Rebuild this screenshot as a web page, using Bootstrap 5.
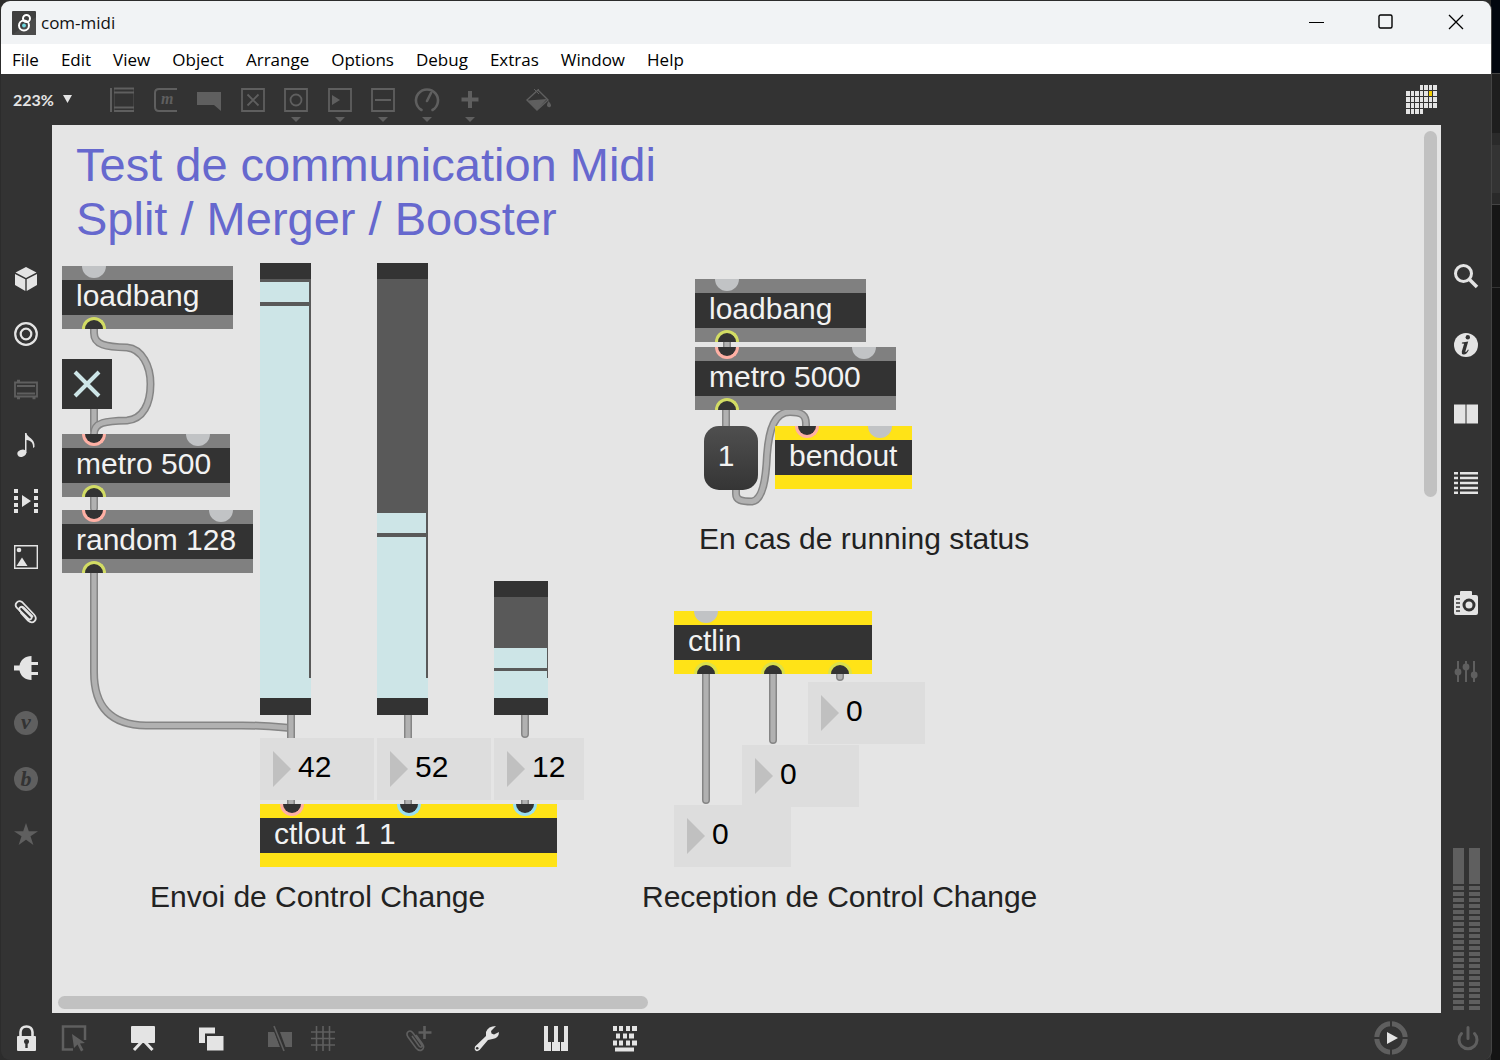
<!DOCTYPE html>
<html lang="fr">
<head>
<meta charset="utf-8">
<meta name="viewport" content="width=device-width, initial-scale=1">
<title>com-midi</title>
<link href="https://cdn.jsdelivr.net/npm/bootstrap@5.3.0/dist/css/bootstrap.min.css" rel="stylesheet">
<style>
:root{--panel:#333;--on:#e4e4e4;--off:#5f5f5f;--paper:#e5e5e5;--lit:#cde5e7;--mid:#595959}
body{background:#151515;font-family:"Liberation Sans",Arial,sans-serif;color:#111}
button{font:inherit}
svg{display:block;overflow:visible;flex-shrink:0}
.desktop{min-height:100vh;padding:1px 8px 0 1px;background:linear-gradient(#02070f 0 73px,#444 73px 74px,#1e1e1e 74px 133px,#2a2a2a 133px 145px,#333 145px 193px,#292929 193px 204px,#444 204px 205px,#161616 205px 287px,#333 287px 288px,#141414 288px) right/9px 100% no-repeat,#2c2c2c}
.app-window{background:var(--panel);border-radius:9px;overflow:hidden;border-right:1px solid #444}
.titlebar{height:43px;background:#f1f3f5;font:17px/24px "Open Sans",sans-serif}
.titlebar .cap{width:70px;height:43px}
.menubar{height:30px;background:#fff;font:17px/31px "Open Sans",sans-serif;gap:22px;padding:0 11px}
.menubar a{color:#000;text-decoration:none}
.plain{background:none;border:0;padding:0;color:var(--off);display:flex;align-items:center;justify-content:center}
.lit{color:var(--on)}
.toolbar{height:51px}
.zoombox{width:62px;margin-left:12px;height:51px}
.zoombox select{appearance:none;background:none;border:0;padding:0;width:50px;color:var(--on);font:bold 16px/24px Lato,sans-serif}
.tools{width:372px;margin-left:35px}
.paint{margin-left:45px}
.leftbar{width:51px;padding:126px 1px 0 0}
.leftbar nav{height:611px}
.rightbar{width:50px;padding-top:116px;padding-bottom:3px}
.rightbar .plain{height:69px}
.rightbar .lower{margin-top:51px}
.meters{gap:5px}
.meter{width:11px;height:162px;background:linear-gradient(var(--off),var(--off)) top/11px 36px no-repeat,repeating-linear-gradient(var(--panel) 0 2px,var(--off) 2px 6px)}
.patch{background:var(--paper);min-height:886px;overflow:hidden}
.wires{left:0;top:0;width:1040px;height:880px}
.wires .edge{stroke:#858585;stroke-width:8}
.wires .core{stroke:#b1b1b1;stroke-width:5}
.thumb{background:#c1c1c1;border-radius:7px}
.thumb-v{right:4px;top:6px;width:13px;height:41.2%}
.thumb-h{left:6px;bottom:4px;width:42.5%;height:13px}
.obj,.num,.vslider,.toggle,.msg,.note{position:absolute}
.obj{font-size:30px;line-height:32px}
.obj .text{background:#333;color:#f2f2f2;height:35px;padding-left:14px;white-space:nowrap}
.ports{height:14px;background:#808080;display:flex;justify-content:space-between;padding:0 20px}
.midi .ports{background:#ffe317}
.ports.out{align-items:flex-end}
.port{width:24px;height:12px;background:#c1c3c5}
.in .port{border-radius:0 0 12px 12px}
.out .port{border-radius:12px 12px 0 0}
.in .hot,.in .cold{background:#333;border:3px solid #ffb0a4;border-top:0}
.in .cold{border-color:#9adff0}
.out .port{background:#333;border:3px solid #d2dc64;border-bottom:0}
.midi .out .port{border-color:#dbe04c}
.num{width:117px;height:62px;background:#ddd;padding-left:13px;display:flex;align-items:center}
.num input{border:0;background:none;padding:0;margin-left:7px;width:50px;font-size:30px;line-height:34px;color:#000;margin-bottom:4px}
.vslider{appearance:none;-webkit-appearance:none;margin:0;width:51px;height:452px;border:solid #333;border-width:16px 0 17px}
.vslider::-webkit-slider-thumb{-webkit-appearance:none;width:1px;height:1px}
.vslider::-webkit-slider-runnable-track{background:none}
.toggle{width:50px;height:50px;background:#333}
.toggle input{appearance:none;inset:0;position:absolute;margin:0}
.msg{border:0;width:54px;height:64px;border-radius:15px;background:linear-gradient(#4f4f4f,#353535);color:#f2f2f2;font-size:30px;line-height:34px;padding:0 10px 4px 0}
.note{font-size:30px;line-height:34px;white-space:nowrap;margin:0;color:#222}
.headline{font-size:47px;line-height:54px;color:#6668ce;font-weight:400}
/* patch layout: one coordinate pair per box */
#headline{left:24px;top:13px}
#load1{left:10px;top:141px;width:171px}
#tog{left:10px;top:234px}
#metro1{left:10px;top:309px;width:168px}
#rand{left:10px;top:385px;width:191px}
#s1{left:208px;top:138px;background:linear-gradient(var(--mid),var(--mid)) 49px 0/2px 399px no-repeat,linear-gradient(var(--mid) 0 3px,var(--lit) 3px 23px,var(--mid) 23px 27px,var(--lit) 27px)}
#s2{left:325px;top:138px;background:linear-gradient(var(--mid),var(--mid)) 49px 0/2px 399px no-repeat,linear-gradient(var(--mid) 0 234px,var(--lit) 234px 254px,var(--mid) 254px 258px,var(--lit) 258px)}
#s3{left:442px;top:456px;width:54px;height:134px;background:linear-gradient(var(--mid),var(--mid)) 53px 0/1px 81px no-repeat,linear-gradient(var(--mid) 0 51px,var(--lit) 51px 71px,var(--mid) 71px 74px,var(--lit) 74px)}
#n1{left:208px;top:613px;width:114px}
#n2{left:325px;top:613px;width:114px}
#n3{left:442px;top:613px;width:90px}
#ctlout{left:208px;top:679px;width:297px}
#cap1{left:98px;top:755px}
#load2{left:643px;top:154px;width:171px}
#metro2{left:643px;top:222px;width:201px}
#one{left:652px;top:301px}
#bend{left:723px;top:301px;width:137px}
#cap2{left:647px;top:397px}
#ctlin{left:622px;top:486px;width:198px}
#n4{left:756px;top:557px}
#n5{left:690px;top:620px}
#n6{left:622px;top:680px}
#cap3{left:590px;top:755px}
.footerbar{height:47px;padding:3px 11px 0 11px}
.gap-a{gap:21px}.gap-b{gap:40px}.gap-c{gap:16px}.gap-d{gap:41px;margin-left:67px}.gap-e{gap:48px}
.padgrid{margin-right:53px}
</style>
<script src="https://cdn.jsdelivr.net/npm/bootstrap@5.3.0/dist/js/bootstrap.bundle.min.js"></script>
</head>
<body>
<div class="desktop d-flex">
<div class="app-window d-flex flex-column flex-fill">

<header class="titlebar d-flex align-items-center">
  <svg class="ms-2" width="32" height="24" viewBox="0 0 32 24"><rect x="3" width="24" height="24" rx="1" fill="#3f3f3f"/><path d="M3 24L27 6v18z" fill="#4b4b4b"/><g fill="none" stroke="#fff" stroke-width="2"><circle cx="15" cy="14.500" r="5"/><circle cx="17.500" cy="7.500" r="3.500"/></g><circle cx="15" cy="14.500" r="1.900" fill="#6fd8e0"/></svg>
  <span class="flex-fill">com-midi</span>
  <button class="plain cap" aria-label="Minimize"><svg width="16" height="16"><path d="M1 7.500h15" stroke="#000"/></svg></button>
  <button class="plain cap" aria-label="Maximize"><svg width="16" height="16"><rect x="1" y="0" width="13" height="13" rx="1.500" fill="none" stroke="#000" stroke-width="1.400"/></svg></button>
  <button class="plain cap" aria-label="Close"><svg width="16" height="16"><path d="M1 0l14 14M15 0L1 14" stroke="#000" stroke-width="1.300"/></svg></button>
</header>

<nav class="menubar d-flex">
  <a href="#">File</a><a href="#">Edit</a><a href="#">View</a><a href="#">Object</a><a href="#">Arrange</a><a href="#">Options</a><a href="#">Debug</a><a href="#">Extras</a><a href="#">Window</a><a href="#">Help</a>
</nav>

<div class="toolbar d-flex align-items-center">
  <div class="zoombox d-flex align-items-center">
    <select aria-label="Zoom"><option>223%</option></select>
    <svg width="10" height="10" viewBox="0 0 10 10" fill="#e4e4e4"><path d="M0 0h9L4.500 8z"/></svg>
  </div>
  <div class="tools d-flex justify-content-between">
    <button class="plain" aria-label="Object"><svg width="24" height="51" viewBox="0 0 24 51" stroke="currentColor" fill="none"><path d="M1 14v24" stroke-width="2"/><path d="M4 14.500h20M4 18.500h20M4 33.500h20M4 37h20" stroke-width="1.800"/><path d="M4.500 14v23M23.500 14v23" stroke-width="1" opacity=".4"/></svg></button>
    <button class="plain" aria-label="Message"><svg width="24" height="51" viewBox="0 0 24 51"><path d="M23 15H5q-4 0-4 4v14q0 4 4 4h18" stroke="currentColor" fill="none" stroke-width="2"/><text x="7" y="30" font-family="Liberation Serif" font-style="italic" font-weight="bold" font-size="16" fill="currentColor">m</text></svg></button>
    <button class="plain" aria-label="Comment"><svg width="24" height="51" viewBox="0 0 24 51"><path d="M0 18h24v19l-7-6H0z" fill="currentColor"/></svg></button>
    <button class="plain" aria-label="Toggle"><svg width="24" height="51" viewBox="0 0 24 51" stroke="currentColor" fill="none" stroke-width="1.800"><path d="M1 15h22v22H1zM6.500 20.500l11 11M17.500 20.500l-11 11"/></svg></button>
    <button class="plain" aria-label="Button"><svg width="24" height="51" viewBox="0 0 24 51" stroke="currentColor" fill="none" stroke-width="1.800"><path d="M1 15h22v22H1z"/><circle cx="12" cy="26" r="5.500"/><path d="M7 43h10l-5 5z" fill="currentColor" stroke="none"/></svg></button>
    <button class="plain" aria-label="Playback"><svg width="24" height="51" viewBox="0 0 24 51" stroke="currentColor" fill="none" stroke-width="1.800"><path d="M1 15h22v22H1z"/><path d="M4 21l8 5-8 5zM7 43h10l-5 5z" fill="currentColor" stroke="none"/></svg></button>
    <button class="plain" aria-label="Slider"><svg width="24" height="51" viewBox="0 0 24 51" stroke="currentColor" fill="none" stroke-width="1.800"><path d="M1 15h22v22H1zM4 26h16"/><path d="M7 43h10l-5 5z" fill="currentColor" stroke="none"/></svg></button>
    <button class="plain" aria-label="Dial"><svg width="24" height="51" viewBox="0 0 24 51"><path d="M6.500 36A11 11 0 1 1 17.500 36M12 27l4-8" stroke="currentColor" fill="none" stroke-width="2.600" stroke-linecap="round"/><path d="M7 43h10l-5 5z" fill="currentColor"/></svg></button>
    <button class="plain" aria-label="Add"><svg width="24" height="51" viewBox="0 0 24 51"><path d="M12 17v17M3.500 25.500h17" stroke="currentColor" stroke-width="4"/><path d="M7 43h10l-5 5z" fill="currentColor"/></svg></button>
  </div>
  <button class="plain paint" aria-label="Format"><svg width="24" height="51" viewBox="0 0 24 51"><path d="M11 16L21 26 10 36 0 26z" fill="none" stroke="currentColor" stroke-width="1.400"/><path d="M1 26.500L20 25 10 36z" fill="currentColor"/><path d="M21.500 27q3 3.500 2.500 5-1.500 2.500-4 0-.5-1.500 1.500-5" fill="currentColor"/><path d="M7 15l5 5M12 15l-4 4" stroke="currentColor" fill="none"/></svg></button>
  <button class="plain lit ms-auto padgrid" aria-label="Palette"><svg width="32" height="30" viewBox="0 0 32 30" fill="currentColor">
    <path d="M14 0h3v5h-3zM18 0h4v5h-4zM23 0h3v5h-3zM27 0h4v5h-4zM0 6h4v5H0zM5 6h3v5H5zM9 6h4v5H9zM14 6h3v5h-3zM18 6h4v5h-4zM27 6h4v5h-4zM0 12h4v5H0zM5 12h3v5H5zM9 12h4v5H9zM14 12h3v5h-3zM18 12h4v5h-4zM23 12h3v5h-3zM27 12h4v5h-4zM0 18h4v5H0zM5 18h3v5H5zM9 18h4v5H9zM14 18h3v5h-3zM18 18h4v5h-4zM23 18h3v5h-3zM27 18h4v5h-4zM0 24h4v5H0zM5 24h3v5H5zM9 24h4v5H9zM14 24h3v5h-3z"/><path d="M23 6h3v5h-3z" fill="#f5d000"/></svg></button>
</div>

<div class="d-flex flex-fill">
  <aside class="leftbar flex-shrink-0">
    <nav class="d-flex flex-column">
      <button class="plain lit flex-fill" aria-label="Packages"><svg width="24" height="24" viewBox="0 0 24 24" fill="currentColor"><path d="M12 0l10.500 5.500L12 11 1.500 5.500zM1 7l10.300 5.300V24L1 18zM23 7l-10.300 5.300V24L23 18z"/></svg></button>
      <button class="plain lit flex-fill" aria-label="Audio"><svg width="24" height="24" viewBox="0 0 24 24" fill="none" stroke="currentColor" stroke-width="2.200"><circle cx="12" cy="12" r="10.800"/><circle cx="12" cy="12" r="5.300"/></svg></button>
      <button class="plain flex-fill" aria-label="Devices"><svg width="24" height="24" viewBox="0 0 24 24" fill="none" stroke="currentColor" stroke-width="1.800"><path d="M1 4.500h22v14H1zM3 8h18M3 15.500h18"/><path d="M3 3h3M3 20h3M18.500 20h3" stroke-width="2.500"/></svg></button>
      <button class="plain lit flex-fill" aria-label="Sounds"><svg width="24" height="24" viewBox="0 0 24 24" fill="currentColor"><ellipse cx="7.800" cy="20.300" rx="4.500" ry="3.500" transform="rotate(-22 7.800 20.300)"/><path d="M11 0h1.500c.5 5 9 5 8 14l-1.500 1c.5-5-2-7.500-6.500-8v13H11z"/></svg></button>
      <button class="plain lit flex-fill" aria-label="Video"><svg width="24" height="24" viewBox="0 0 24 24" fill="currentColor"><path d="M0 0h4v4H0zM0 7h4v4H0zM0 14h4v4H0zM0 20h4v4H0zM20 0h4v4h-4zM20 7h4v4h-4zM20 14h4v4h-4zM20 20h4v4h-4zM8 6l9 6-9 6z"/></svg></button>
      <button class="plain lit flex-fill" aria-label="Images"><svg width="24" height="24" viewBox="0 0 24 24" fill="currentColor"><path d="M.7.700h22.600v22.600H.7z" fill="none" stroke="currentColor" stroke-width="1.400"/><circle cx="5" cy="5" r="2.300"/><path d="M2.500 21L8 12.500l5.500 8.500z"/></svg></button>
      <button class="plain lit flex-fill" aria-label="Snippets"><svg width="24" height="24" viewBox="0 0 24 24" fill="none" stroke="currentColor" stroke-width="1.800" stroke-linecap="round"><path d="M8 7l9 9c2 2.500-1 4.500-3 2.500L3 8C-.5 4 4-.5 8 2l12 12.500c4.500 5-1 10.500-6 6L7 13"/><path d="M12 17L6 11c-2-3 1-5.500 3.500-3.500l9 9"/></svg></button>
      <button class="plain lit flex-fill" aria-label="Plug-ins"><svg width="24" height="24" viewBox="0 0 24 24" fill="currentColor"><path d="M17.500 0v6H24v3h-6.500v7H24v3h-6.500v5C11 24 6.500 20 5.500 14.500H0v-5h5.500C6.500 4 11 0 17.500 0z"/></svg></button>
      <button class="plain flex-fill" aria-label="Vizzie"><svg width="24" height="24" viewBox="0 0 24 24"><circle cx="12" cy="12" r="12" fill="currentColor"/><text x="12" y="18" text-anchor="middle" font-family="Liberation Serif" font-weight="bold" font-style="italic" font-size="22" fill="#333">v</text></svg></button>
      <button class="plain flex-fill" aria-label="BEAP"><svg width="24" height="24" viewBox="0 0 24 24"><circle cx="12" cy="12" r="12" fill="currentColor"/><text x="12" y="19" text-anchor="middle" font-family="Liberation Serif" font-weight="bold" font-style="italic" font-size="22" fill="#333">b</text></svg></button>
      <button class="plain flex-fill" aria-label="Favorites"><svg width="24" height="24" viewBox="0 0 24 24" fill="currentColor"><path d="M12 1l2.800 8.300H24l-7.500 5 2.900 8.700-7.400-5.300L4.600 23l2.900-8.700L0 9.300h9.200z"/></svg></button>
    </nav>
  </aside>

  <main class="patch position-relative flex-fill">
    <svg class="wires position-absolute" viewBox="52 125 1040 880" fill="none" stroke-linecap="round">
      <defs>
        <path id="w-rand" d="M94 573V672C94 706 110 725 146 725.500H235C262 725 278 727 289 728"/>
        <path id="w-load" d="M94 329V333C94 345 106 347 127 347.500C142 349 150.500 366 150.500 384C150.500 404 143 419 127 420.500C106 421 94 422 94 434"/>
        <path id="w-bend" d="M736 490V494C736 500 741 501.500 752 501.500C763 500 766 478 767 455C769 428 775 412 790 412C802 412 806 415 806 424V428"/>
      </defs>
      <use href="#w-rand" class="edge"/><use href="#w-rand" class="core"/>
      <path class="edge" d="M94 405V430M94 497V508M291 712V740M408 712V740M525 712V734M291 796V808M408 796V808M525 796V808M727 342V350M726 410V427M706 674V800M773 674V740M840 674V677"/>
      <path class="core" d="M94 405V430M94 497V508M291 712V740M408 712V740M525 712V734M291 796V808M408 796V808M525 796V808M727 342V350M726 410V427M706 674V800M773 674V740M840 674V677"/>
      <use href="#w-load" class="edge"/><use href="#w-load" class="core"/>
      <use href="#w-bend" class="edge"/><use href="#w-bend" class="core"/>
    </svg>

    <h1 class="note headline" id="headline">Test de communication Midi<br>Split / Merger / Booster</h1>

    <div class="obj" id="load1"><div class="ports in"><i class="port"></i></div><div class="text">loadbang</div><div class="ports out"><i class="port"></i></div></div>
    <label class="toggle" id="tog" aria-label="Metro on"><input type="checkbox" checked aria-label="Metro on"><svg width="50" height="50"><path d="M13 13l24 24M37 13L13 37" stroke="#cde5e7" stroke-width="4"/></svg></label>
    <div class="obj" id="metro1"><div class="ports in"><i class="port hot"></i><i class="port"></i></div><div class="text">metro 500</div><div class="ports out"><i class="port"></i></div></div>
    <div class="obj" id="rand"><div class="ports in"><i class="port hot"></i><i class="port"></i></div><div class="text">random 128</div><div class="ports out"><i class="port"></i></div></div>

    <input class="vslider" id="s1" type="range" min="0" max="127" value="122" aria-label="Control number">
    <input class="vslider" id="s2" type="range" min="0" max="127" value="52" aria-label="Value">
    <input class="vslider" id="s3" type="range" min="0" max="16" value="12" aria-label="Channel">

    <label class="num" id="n1"><svg width="18" height="36" fill="#c0c0c0"><path d="M0 0l18 18L0 36z"/></svg><input value="42" aria-label="Value 1"></label>
    <label class="num" id="n2"><svg width="18" height="36" fill="#c0c0c0"><path d="M0 0l18 18L0 36z"/></svg><input value="52" aria-label="Value 2"></label>
    <label class="num" id="n3"><svg width="18" height="36" fill="#c0c0c0"><path d="M0 0l18 18L0 36z"/></svg><input value="12" aria-label="Value 3"></label>
    <div class="obj midi" id="ctlout"><div class="ports in"><i class="port hot"></i><i class="port cold"></i><i class="port cold"></i></div><div class="text">ctlout 1 1</div><div class="ports out"></div></div>
    <p class="note" id="cap1">Envoi de Control Change</p>

    <div class="obj" id="load2"><div class="ports in"><i class="port"></i></div><div class="text">loadbang</div><div class="ports out"><i class="port"></i></div></div>
    <div class="obj" id="metro2"><div class="ports in"><i class="port hot"></i><i class="port"></i></div><div class="text">metro 5000</div><div class="ports out"><i class="port"></i></div></div>
    <button class="msg" id="one">1</button>
    <div class="obj midi" id="bend"><div class="ports in"><i class="port hot"></i><i class="port"></i></div><div class="text">bendout</div><div class="ports out"></div></div>
    <p class="note" id="cap2">En cas de running status</p>

    <div class="obj midi" id="ctlin"><div class="ports in"><i class="port"></i></div><div class="text">ctlin</div><div class="ports out"><i class="port"></i><i class="port"></i><i class="port"></i></div></div>
    <label class="num" id="n4"><svg width="18" height="36" fill="#c0c0c0"><path d="M0 0l18 18L0 36z"/></svg><input value="0" aria-label="Channel in"></label>
    <label class="num" id="n5"><svg width="18" height="36" fill="#c0c0c0"><path d="M0 0l18 18L0 36z"/></svg><input value="0" aria-label="Controller in"></label>
    <label class="num" id="n6"><svg width="18" height="36" fill="#c0c0c0"><path d="M0 0l18 18L0 36z"/></svg><input value="0" aria-label="Value in"></label>
    <p class="note" id="cap3">Reception de Control Change</p>

    <div class="thumb thumb-v position-absolute"></div>
    <div class="thumb thumb-h position-absolute"></div>
  </main>

  <aside class="rightbar flex-shrink-0 d-flex flex-column">
    <button class="plain lit" aria-label="Search"><svg width="24" height="24" viewBox="0 0 24 24" fill="none" stroke="currentColor"><circle cx="9.500" cy="9.500" r="8" stroke-width="3"/><path d="M15 15l8 8" stroke-width="3.500"/></svg></button>
    <button class="plain lit" aria-label="Inspector"><svg width="24" height="24" viewBox="0 0 24 24"><circle cx="12" cy="12" r="12" fill="currentColor"/><circle cx="13.800" cy="4.300" r="2.200" fill="#333"/><path d="M8 9.500l6.200-1-3 10.500q1.500 0 2.800-2.500l.8.500q-2.500 5-5.500 4.500-2-.5-1.500-3l2.300-7.800-2.300-.2z" fill="#333"/></svg></button>
    <button class="plain lit" aria-label="Reference"><svg width="24" height="24" viewBox="0 0 24 24" fill="currentColor"><path d="M0 2.500h11.500v19H0zM12.500 2.500H24v19H12.500z"/></svg></button>
    <button class="plain lit" aria-label="Console"><svg width="24" height="24" viewBox="0 0 24 24" stroke="currentColor" stroke-width="2.400"><path d="M0 2.200h4M6 2.200h18M0 7h4M6 7h18M0 12h4M6 12h18M0 17h4M6 17h18M0 21.800h4M6 21.800h18"/></svg></button>
    <button class="plain lit lower" aria-label="Snapshots"><svg width="24" height="24" viewBox="0 0 24 24"><path d="M6 4V1q0-1 1-1h10q1 0 1 1v3h4q2 0 2 2v16q0 2-2 2H2q-2 0-2-2V6q0-2 2-2z" fill="currentColor"/><circle cx="15" cy="14" r="5" fill="none" stroke="#333" stroke-width="3"/><path d="M2 8h4M2 12h4M2 16h4M2 20h4" stroke="#333" stroke-width="1.500"/></svg></button>
    <button class="plain" aria-label="Mixer"><svg width="24" height="24" viewBox="0 0 24 24"><path d="M4 1v21M12 1v21M20 1v21" stroke="currentColor" stroke-width="2"/><g fill="currentColor"><circle cx="4" cy="12" r="3.400"/><circle cx="12" cy="7" r="3.400"/><circle cx="20.200" cy="15" r="3.400"/></g></svg></button>
    <div class="meters d-flex justify-content-center mt-auto"><div class="meter"></div><div class="meter"></div></div>
  </aside>
</div>

<footer class="footerbar d-flex justify-content-between align-items-center">
  <div class="d-flex">
    <div class="d-flex gap-b">
      <div class="d-flex gap-a">
        <button class="plain lit" aria-label="Lock"><svg width="28" height="28" viewBox="0 0 28 28" fill="currentColor"><path d="M8.500 14V8Q9 2.500 14.500 2.500T20.500 8v6" fill="none" stroke="currentColor" stroke-width="2.600"/><rect x="5" y="12" width="19" height="15" rx="1"/><circle cx="14.500" cy="17.500" r="2.500" fill="#333"/><path d="M13.300 18h2.400v6h-2.400z" fill="#333"/></svg></button>
        <button class="plain" aria-label="Operate"><svg width="28" height="28" viewBox="0 0 28 28"><path d="M12 25.500H2V2.500h22V16" fill="none" stroke="currentColor" stroke-width="2.500"/><path d="M11 10l13 9-5 .5 3.500 6.500-2.500 1.500-3.500-7L13 24z" fill="currentColor"/></svg></button>
      </div>
      <button class="plain lit" aria-label="Presentation"><svg width="28" height="28" viewBox="0 0 28 28"><rect x="2" y="2" width="24" height="17" rx="1" fill="currentColor"/><path d="M5 26L12.500 18M23.500 26L16 18" stroke="currentColor" stroke-width="3"/></svg></button>
      <button class="plain lit" aria-label="Windows"><svg width="28" height="28" viewBox="0 0 28 28" fill="currentColor"><path d="M2 3.500h16v6H8v9.500H2zM10 12h16.500v14.500H10z"/></svg></button>
      <div class="d-flex gap-c">
        <button class="plain" aria-label="Snap"><svg width="28" height="28" viewBox="0 0 28 28"><path d="M3 8h6.500l5.500 15H3zM15 8h12v15h-6.500z" fill="currentColor"/><path d="M9 2l10 25" stroke="#333" stroke-width="4"/><path d="M9 2l10 25" stroke="currentColor" stroke-width="1.600"/></svg></button>
        <button class="plain" aria-label="Grid"><svg width="28" height="28" viewBox="0 0 28 28" stroke="currentColor" stroke-width="1.600"><path d="M7.500 2v25M14 2v25M20.500 2v25M2 8h24M2 14.500h24M2 21h24"/></svg></button>
      </div>
    </div>
    <div class="d-flex gap-d">
      <button class="plain" aria-label="Add snippet"><svg width="28" height="28" viewBox="0 0 28 28" fill="none" stroke="currentColor" stroke-width="1.600"><path d="M8 12l7 10c2 2 4 1 2-2L9 9C6 5 1 8 4 13l8 11c4 5 10 1 6.500-4L12 11"/><path d="M20.500 2v13M14.500 8.500h13" stroke-width="2.600"/></svg></button>
      <button class="plain lit" aria-label="Tools"><svg width="28" height="28" viewBox="0 0 28 28"><path d="M23 2l-5 5 .5 2.500 2.500 1L26 8q0 6-6.500 7L15 16 6.500 26q-2.500 2-4 .5t-.5-4L13 12V8q2-6 10-6z" fill="currentColor"/><circle cx="4.200" cy="24.300" r="1.300" fill="#333"/></svg></button>
      <button class="plain lit" aria-label="Keyboard"><svg width="28" height="28" viewBox="0 0 28 28" fill="currentColor"><path d="M2 2h4v16h3v9H2zM12 2h4v16h2v9h-8v-9h2zM22 2h4v25h-7v-9h3z"/></svg></button>
      <button class="plain lit" aria-label="Key mapping"><svg width="28" height="28" viewBox="0 0 28 28" fill="currentColor"><path d="M2 2h4v5H2zM8 2h4v5H8zM15 2h4v5h-4zM21 2h5v5h-5zM5 9.500h4v5H5zM12 9.500h4v5h-4zM18 9.500h5v5h-5zM2 16.500h4v5H2zM8 16.500h4v5H8zM15 16.500h4v5h-4zM21 16.500h5v5h-5zM4 23.500h19v4H4z"/></svg></button>
    </div>
  </div>
  <div class="d-flex align-items-center gap-e">
    <button class="plain" aria-label="Run"><svg width="34" height="34" viewBox="0 0 34 34"><circle cx="17" cy="17" r="14.200" fill="none" stroke="currentColor" stroke-width="5"/><path d="M17 0v34M0 17h34" stroke="#333" stroke-width="2"/><circle cx="17" cy="17" r="11" fill="#333"/><path d="M13 11l11 6-11 6z" fill="#e4e4e4"/></svg></button>
    <button class="plain" aria-label="Audio on"><svg width="24" height="24" viewBox="0 0 24 24" fill="none" stroke="currentColor" stroke-width="3" stroke-linecap="round"><path d="M5.500 7.500a9 9 0 1 0 13 0M12 1.500v11"/></svg></button>
  </div>
</footer>
</div>
</div>
</body>
</html>
